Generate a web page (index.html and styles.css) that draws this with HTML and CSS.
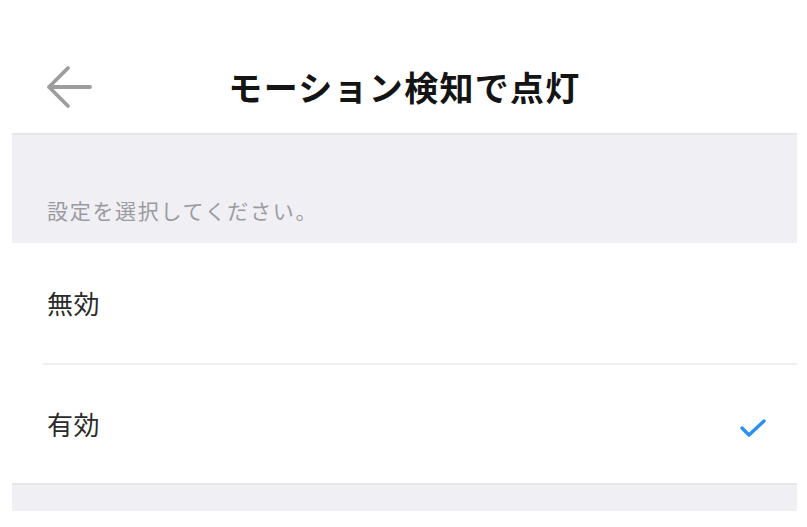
FILE: index.html
```html
<!DOCTYPE html>
<html lang="ja">
<head>
<meta charset="utf-8">
<link rel="stylesheet" href="styles.css">
</head>
<body>
<div class="screen">
  <header class="header">
    <div class="back">
      <svg width="46" height="46" viewBox="0 0 46 46" class="back-icon">
        <path d="M22 3 L3 22 L22 41 M3 22 L44 22" fill="none" stroke="#9d9d9d" stroke-width="3.8" stroke-linecap="round" stroke-linejoin="round"/>
      </svg>
    </div>
    <h1 class="title">モーション検知で点灯</h1>
    <div></div>
  </header>
  <section class="group-head">
    <p class="hint">設定を選択してください。</p>
  </section>
  <ul class="options">
    <li class="option"><span class="label">無効</span></li>
    <li class="option"><span class="label">有効</span>
      <svg class="check" width="28" height="22" viewBox="0 0 28 22">
        <path d="M3 11 L10 18 L25 4" fill="none" stroke="#2a8ff0" stroke-width="3.4" stroke-linecap="round" stroke-linejoin="round"/>
      </svg>
    </li>
  </ul>
  <div class="group-foot"></div>
</div>
</body>
</html>
```

FILE: styles.css
```css
html, body {
  margin: 0;
  padding: 0;
  background: #ffffff;
}
body {
  font-family: "Noto Sans CJK JP", "Noto Sans", sans-serif;
  width: 807px;
  height: 527px;
  overflow: hidden;
}
.screen {
  margin-left: 12px;
  width: 785px;
}
.header {
  height: 133px;
  box-sizing: border-box;
  padding-top: 40px;
  display: grid;
  grid-template-columns: 1fr auto 1fr;
  align-items: center;
  background: #fff;
}
.back {
  padding-left: 34px;
  display: flex;
  align-items: center;
  padding-top: 2px;
}
.back-icon {
  display: block;
}
.title {
  margin: 0;
  font-size: 34px;
  font-weight: 700;
  color: #141414;
  letter-spacing: 1.3px;
  line-height: 1;
}
.group-head {
  height: 108px;
  background: #efeff4;
  border-top: 2px solid #e6e6ea;
  display: flex;
  align-items: flex-end;
}
.hint {
  margin: 0 0 22px 35px;
  font-size: 21px;
  color: #9b9b9f;
  letter-spacing: 1.7px;
  line-height: 1;
}
.options {
  list-style: none;
  margin: 0;
  padding: 0;
  background: #fff;
}
.option {
  height: 120px;
  margin-left: 31px;
  padding-left: 4px;
  padding-right: 30px;
  display: flex;
  align-items: center;
  justify-content: space-between;
  box-sizing: border-box;
}
.option + .option {
  border-top: 2px solid #efefef;
}
.label {
  font-size: 26px;
  color: #2b2b2b;
  line-height: 1;
  letter-spacing: 0.5px;
}
.check {
  display: block;
  margin-top: 8px;
}
.group-foot {
  height: 26px;
  background: #efeff4;
  border-top: 2px solid #e6e6ea;
}
```
